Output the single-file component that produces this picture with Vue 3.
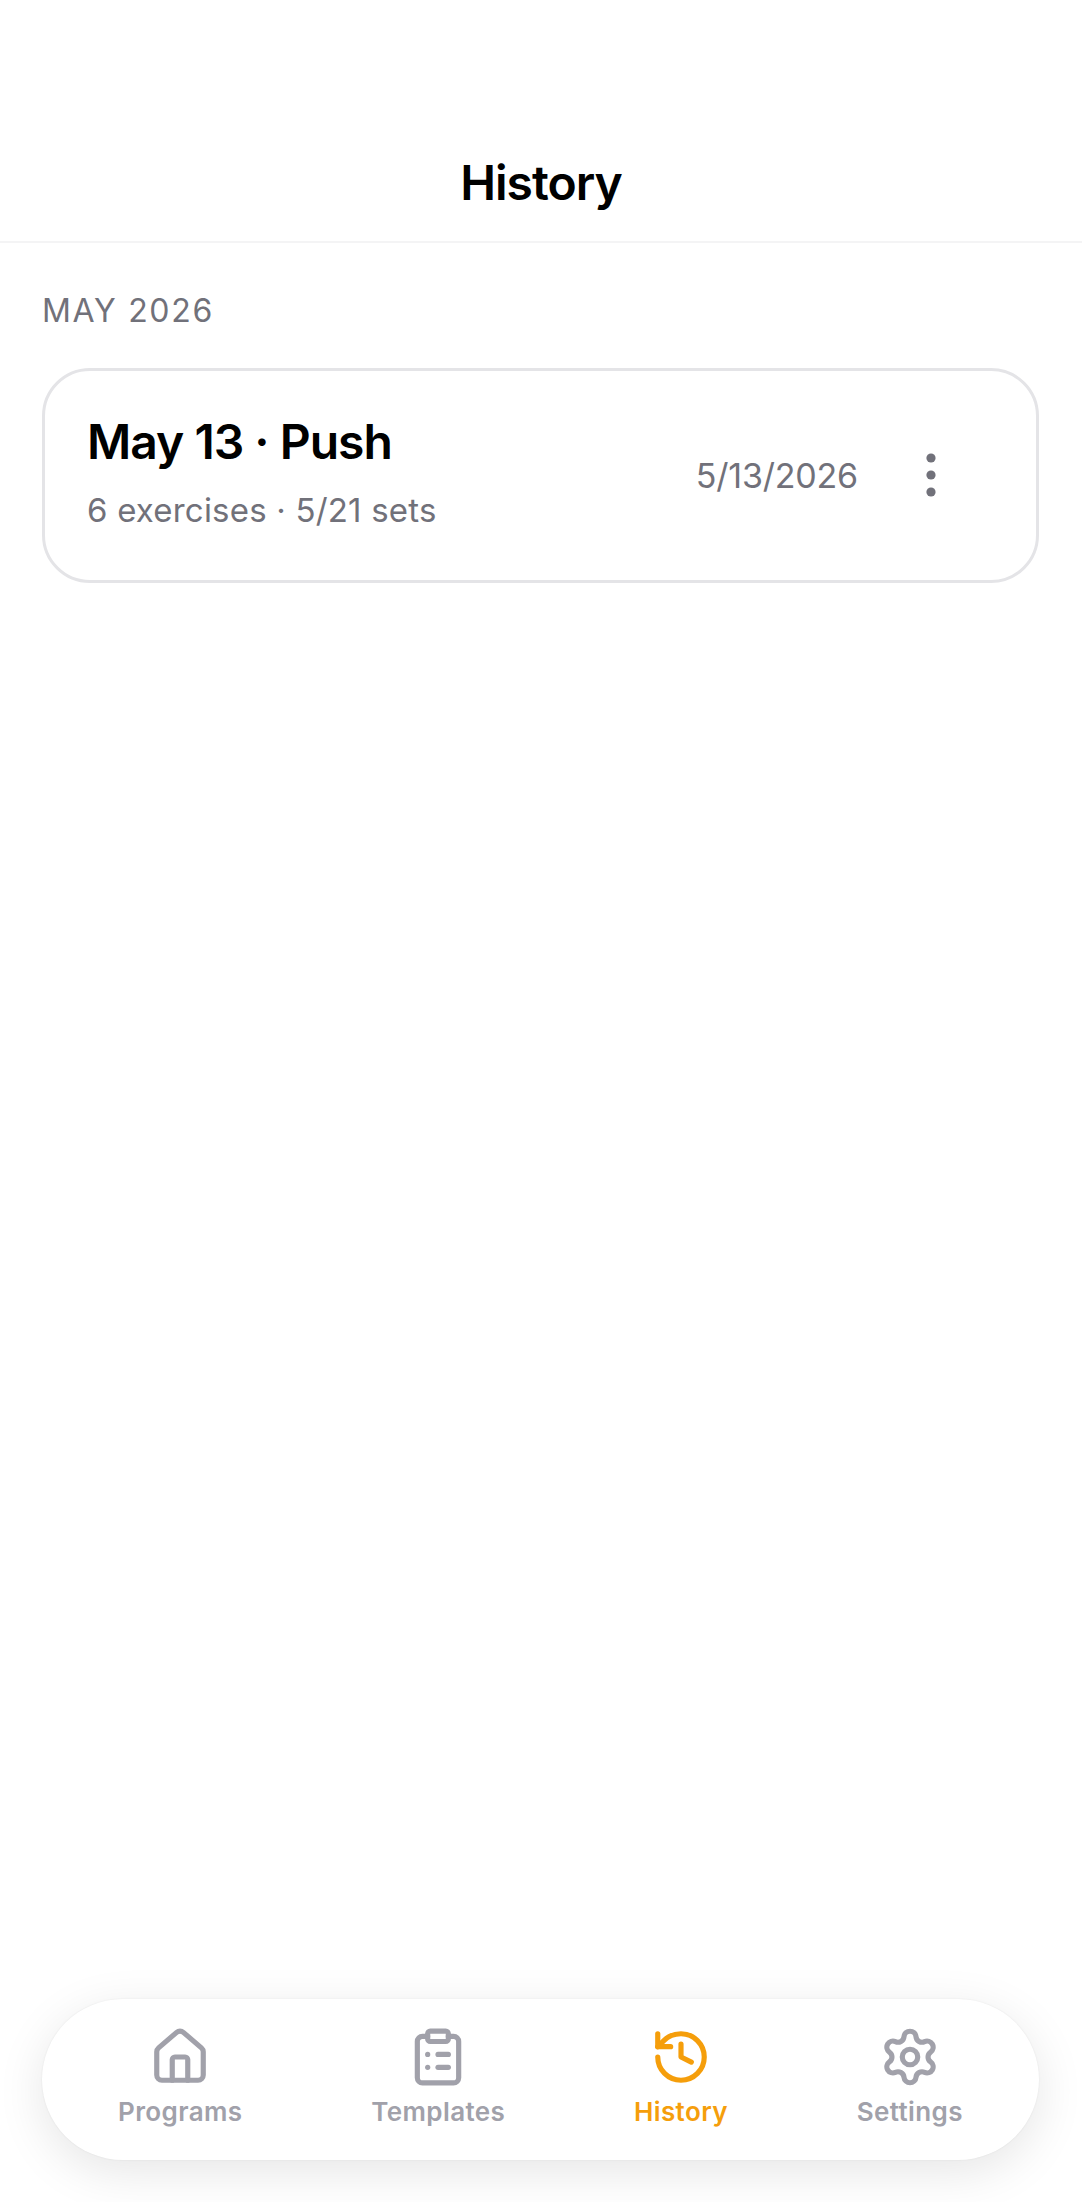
<template>
  <div class="page">
    <header class="top">
      <h1>History</h1>
    </header>

    <main class="content">
      <h2 class="month">MAY 2026</h2>
      <section class="card">
        <div class="info">
          <div class="name">May 13 · Push</div>
          <div class="meta">6 exercises · 5/21 sets</div>
        </div>
        <div class="date">5/13/2026</div>
        <svg class="more" viewBox="0 0 24 66" fill="currentColor">
          <circle cx="12" cy="16" r="4.6" />
          <circle cx="12" cy="33" r="4.6" />
          <circle cx="12" cy="50" r="4.6" />
        </svg>
      </section>
    </main>

    <nav class="tabs">
      <div v-for="tab in tabs" :key="tab.label" class="tab" :class="{ active: tab.active }">
        <svg class="tab-icon" viewBox="0 0 24 24" fill="none" stroke="currentColor" stroke-linecap="round" stroke-linejoin="round">
          <path v-for="d in tab.paths" :key="d" :d="d" />
          <rect v-if="tab.label === 'Templates'" x="8" y="2" width="8" height="4" rx="1" />
          <circle v-if="tab.label === 'Settings'" cx="12" cy="12" r="3" />
        </svg>
        <span>{{ tab.label }}</span>
      </div>
    </nav>
  </div>
</template>

<script setup>
const tabs = [
  {
    label: 'Programs',
    paths: [
      'M15 21v-8a1 1 0 0 0-1-1h-4a1 1 0 0 0-1 1v8',
      'M3 10a2 2 0 0 1 .709-1.528l7-5.999a2 2 0 0 1 2.582 0l7 5.999A2 2 0 0 1 21 10v9a2 2 0 0 1-2 2H5a2 2 0 0 1-2-2z',
    ],
  },
  {
    label: 'Templates',
    paths: [
      'M16 4h2a2 2 0 0 1 2 2v14a2 2 0 0 1-2 2H6a2 2 0 0 1-2-2V6a2 2 0 0 1 2-2h2',
      'M12 11h4',
      'M12 16h4',
      'M8 11h.01',
      'M8 16h.01',
    ],
  },
  {
    label: 'History',
    active: true,
    paths: [
      'M3 12a9 9 0 1 0 9-9 9.75 9.75 0 0 0-6.74 2.74L3 8',
      'M3 3v5h5',
      'M12 7v5l4 2',
    ],
  },
  {
    label: 'Settings',
    paths: [
      'M9.671 4.136a2.34 2.34 0 0 1 4.659 0 2.34 2.34 0 0 0 3.319 1.915 2.34 2.34 0 0 1 2.33 4.033 2.34 2.34 0 0 0 0 3.831 2.34 2.34 0 0 1-2.33 4.033 2.34 2.34 0 0 0-3.319 1.915 2.34 2.34 0 0 1-4.659 0 2.34 2.34 0 0 0-3.32-1.915 2.34 2.34 0 0 1-2.33-4.033 2.34 2.34 0 0 0 0-3.831A2.34 2.34 0 0 1 6.35 6.051a2.34 2.34 0 0 0 3.32-1.915',
    ],
  },
]
</script>

<style>
html,
body {
  margin: 0;
  background: #fff;
}
</style>

<style scoped>
.page {
  width: 1082px;
  height: 2202px;
  display: flex;
  flex-direction: column;
  overflow: hidden;
  background: #fff;
  font-family: Inter, "Liberation Sans", sans-serif;
}

.top {
  height: 243px;
  box-sizing: border-box;
  padding-top: 153px;
  border-bottom: 2px solid #f4f4f5;
}

.top h1 {
  margin: 0;
  font-size: 48px;
  line-height: 60px;
  font-weight: 600;
  text-align: center;
  letter-spacing: -1px;
  color: #000;
}

.content {
  flex: 1;
  padding: 51px 43px 0 42px;
}

.month {
  margin: 0 0 40px;
  font-size: 32px;
  line-height: 34px;
  font-weight: 400;
  letter-spacing: 1.7px;
  color: #71717a;
}

.card {
  height: 215px;
  box-sizing: border-box;
  display: flex;
  align-items: center;
  padding: 0 42px;
  border: 3px solid #e4e4e7;
  border-radius: 48px;
}

.info {
  flex: 1;
  padding-bottom: 7px;
}

.name {
  font-size: 48px;
  line-height: 56px;
  font-weight: 600;
  letter-spacing: -1px;
  color: #000;
}

.meta {
  margin-top: 20px;
  font-size: 33px;
  line-height: 40px;
  letter-spacing: 0.2px;
  color: #71717a;
}

.date {
  font-size: 34px;
  line-height: 42px;
  letter-spacing: -0.2px;
  color: #71717a;
}

.more {
  width: 24px;
  height: 66px;
  margin-left: 61px;
  margin-right: 51px;
  margin-bottom: 2px;
  color: #71717a;
}

.tabs {
  flex: none;
  height: 161px;
  box-sizing: border-box;
  margin: 0 43px 42px 42px;
  padding: 0 76px 4px;
  display: flex;
  justify-content: space-between;
  align-items: center;
  background: #fff;
  border-radius: 81px;
  box-shadow: 0 0 2px rgba(0, 0, 0, 0.08), 0 12px 48px rgba(0, 0, 0, 0.1);
}

.tab {
  display: flex;
  flex-direction: column;
  align-items: center;
  gap: 7px;
  font-size: 26px;
  line-height: 34px;
  font-weight: 600;
  letter-spacing: 0.4px;
  color: #a1a1aa;
}

.tab.active {
  color: #f59e0b;
}

.tab-icon {
  width: 62px;
  height: 62px;
  stroke-width: 2;
}
</style>
